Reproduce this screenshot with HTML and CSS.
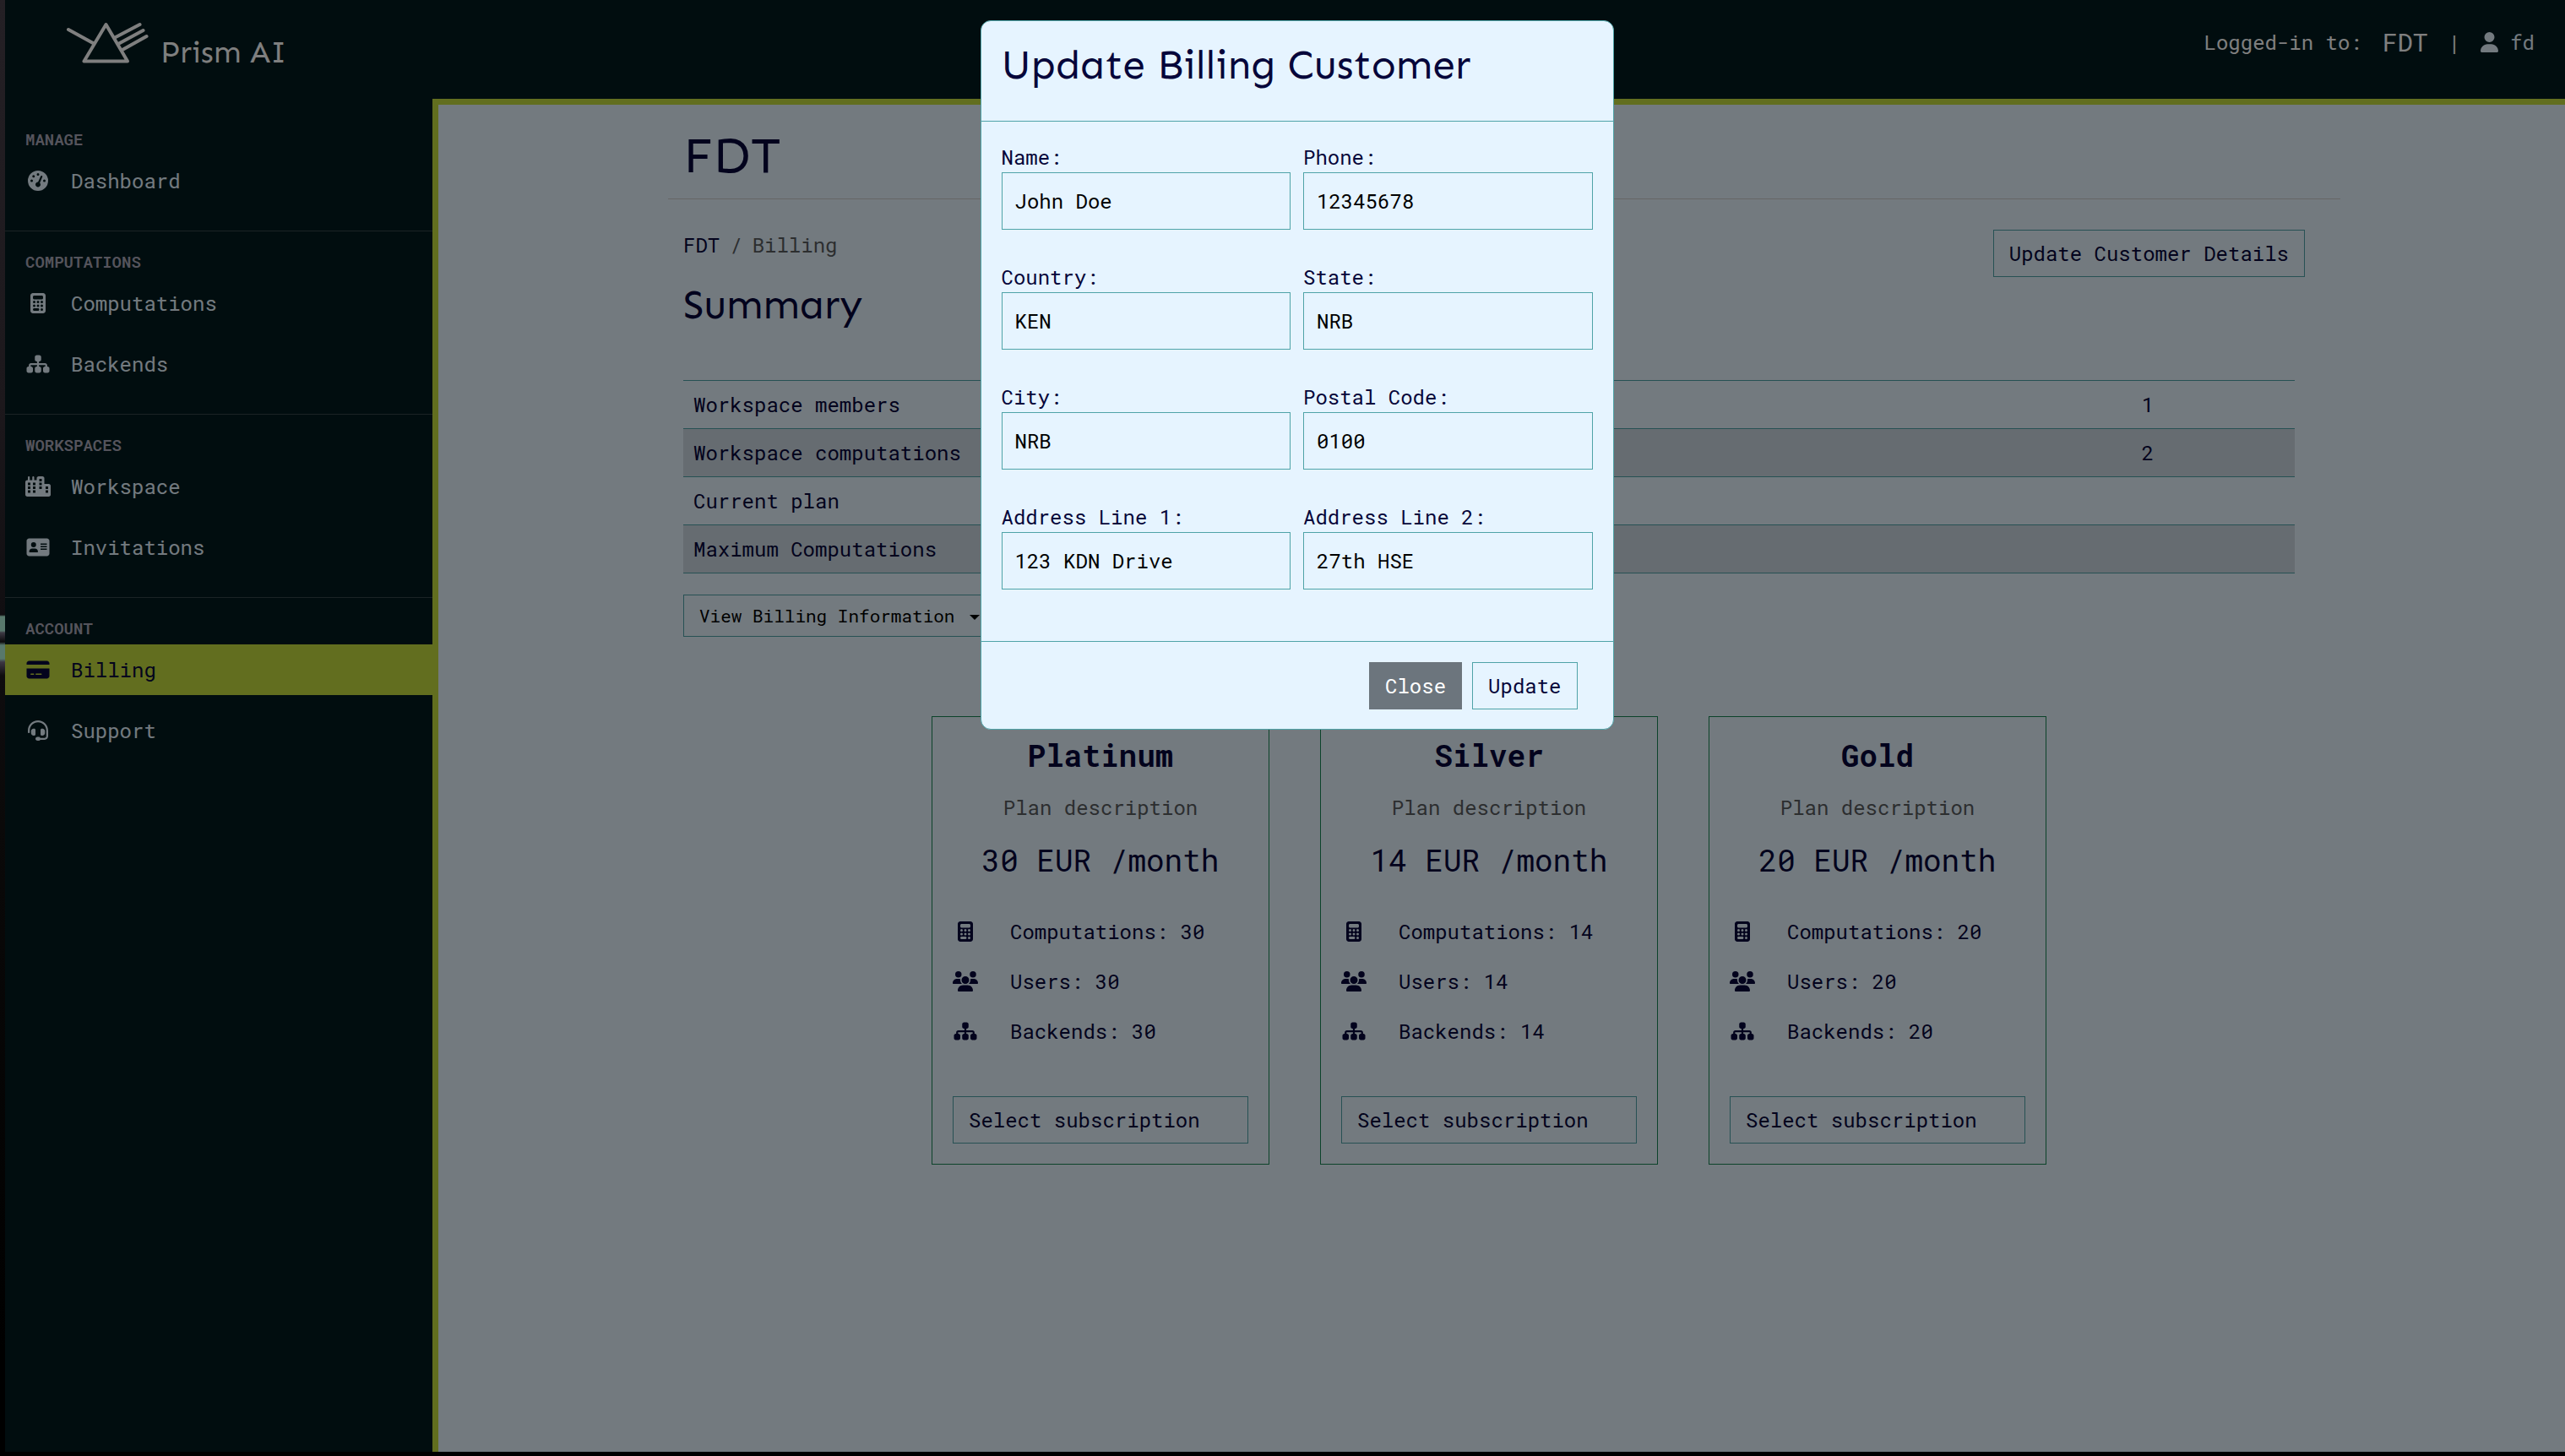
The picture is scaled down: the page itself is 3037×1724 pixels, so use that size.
FILE: index.html
```html
<!DOCTYPE html>
<html lang="en">
<head>
<meta charset="utf-8">
<title>Prism AI – Billing</title>
<link rel="stylesheet" href="styles.css">
</head>
<body>
<svg class="sprite" aria-hidden="true">
  <symbol id="i-gauge" viewBox="0 0 512 512"><path d="M0 256a256 256 0 1 1 512 0A256 256 0 1 1 0 256zM288 96a32 32 0 1 0 -64 0 32 32 0 1 0 64 0zM256 416c35.300 0 64-28.700 64-64c0-17.400-6.900-33.100-18.100-44.600L366 161.700c5.300-12.100-.2-26.300-12.300-31.600s-26.300 .2-31.600 12.300L257.900 288c-.6 0-1.300 0-1.900 0c-35.300 0-64 28.700-64 64s28.700 64 64 64zM176 144a32 32 0 1 0 -64 0 32 32 0 1 0 64 0zM96 288a32 32 0 1 0 0-64 32 32 0 1 0 0 64zm352-32a32 32 0 1 0 -64 0 32 32 0 1 0 64 0z"/></symbol>
  <symbol id="i-calculator" viewBox="0 0 384 512"><path d="M64 0C28.700 0 0 28.700 0 64V448c0 35.300 28.700 64 64 64H320c35.300 0 64-28.700 64-64V64c0-35.300-28.700-64-64-64H64zM96 64H288c17.700 0 32 14.300 32 32v32c0 17.700-14.300 32-32 32H96c-17.700 0-32-14.300-32-32V96c0-17.700 14.300-32 32-32zm32 160a32 32 0 1 1 -64 0 32 32 0 1 1 64 0zM96 352a32 32 0 1 1 0-64 32 32 0 1 1 0 64zM64 416c0-17.700 14.300-32 32-32h96c17.700 0 32 14.300 32 32s-14.300 32-32 32H96c-17.700 0-32-14.300-32-32zM192 256a32 32 0 1 1 0-64 32 32 0 1 1 0 64zm32 64a32 32 0 1 1 -64 0 32 32 0 1 1 64 0zm64-64a32 32 0 1 1 0-64 32 32 0 1 1 0 64zm32 64a32 32 0 1 1 -64 0 32 32 0 1 1 64 0zM288 448a32 32 0 1 1 0-64 32 32 0 1 1 0 64z"/></symbol>
  <symbol id="i-sitemap" viewBox="0 0 576 512"><path d="M208 80c0-26.500 21.500-48 48-48h64c26.500 0 48 21.500 48 48v64c0 26.500-21.500 48-48 48h-8v40H464c30.900 0 56 25.100 56 56v32h8c26.500 0 48 21.500 48 48v64c0 26.500-21.500 48-48 48H464c-26.500 0-48-21.500-48-48V368c0-26.500 21.500-48 48-48h8V288c0-4.400-3.600-8-8-8H312v40h8c26.500 0 48 21.500 48 48v64c0 26.500-21.500 48-48 48H256c-26.500 0-48-21.500-48-48V368c0-26.500 21.500-48 48-48h8V280H112c-4.400 0-8 3.600-8 8v32h8c26.500 0 48 21.500 48 48v64c0 26.500-21.500 48-48 48H48c-26.500 0-48-21.500-48-48V368c0-26.500 21.500-48 48-48h8V288c0-30.900 25.100-56 56-56H264V192h-8c-26.500 0-48-21.500-48-48V80z"/></symbol>
  <symbol id="i-city" viewBox="0 0 640 512"><path fill-rule="evenodd" d="M480 48c0-26.500-21.500-48-48-48H336c-26.500 0-48 21.500-48 48V96H224V24c0-13.300-10.700-24-24-24s-24 10.700-24 24V96H112V24c0-13.300-10.700-24-24-24S64 10.700 64 24V96H48C21.500 96 0 117.500 0 144V464c0 26.500 21.500 48 48 48H592c26.500 0 48-21.500 48-48V240c0-26.500-21.500-48-48-48H480V48zM64 160h64v64H64zM192 160h64v64H192zM64 256h64v64H64zM192 256h64v64H192zM64 352h64v64H64zM192 352h64v64H192zM352 64h64v64H352zM352 160h64v64H352zM352 256h64v64H352zM512 256h64v64H512zM512 352h64v64H512z"/></symbol>
  <symbol id="i-card" viewBox="0 0 576 512"><path fill-rule="evenodd" d="M64 32C28.700 32 0 60.700 0 96V416c0 35.300 28.700 64 64 64H512c35.300 0 64-28.700 64-64V96c0-35.300-28.700-64-64-64H64zm80 256h64c44.200 0 80 35.800 80 80c0 8.800-7.200 16-16 16H80c-8.800 0-16-7.200-16-16c0-44.200 35.800-80 80-80zm-32-96a64 64 0 1 1 128 0 64 64 0 1 1 -128 0zM352 160H512v32H352zM352 224H512v32H352zM352 288H512v32H352z"/></symbol>
  <symbol id="i-credit" viewBox="0 0 576 512"><path d="M64 32C28.700 32 0 60.700 0 96v32H576V96c0-35.300-28.700-64-64-64H64zM576 224H0V416c0 35.300 28.700 64 64 64H512c35.300 0 64-28.700 64-64V224zM112 352h64c8.800 0 16 7.200 16 16s-7.200 16-16 16H112c-8.800 0-16-7.200-16-16s7.200-16 16-16zm112 16c0-8.800 7.200-16 16-16H368c8.800 0 16 7.200 16 16s-7.200 16-16 16H240c-8.800 0-16-7.200-16-16z"/></symbol>
  <symbol id="i-headset" viewBox="0 0 512 512"><path d="M256 48C141.100 48 48 141.100 48 256v40c0 13.300-10.700 24-24 24s-24-10.700-24-24V256C0 114.600 114.600 0 256 0S512 114.600 512 256V400.100c0 48.600-39.400 88-88.100 88L313.600 488c-8.300 14.300-23.800 24-41.600 24H240c-26.500 0-48-21.500-48-48s21.500-48 48-48h32c17.800 0 33.300 9.700 41.600 24l110.400 .1c22.100 0 40-17.900 40-40V256c0-114.900-93.100-208-208-208zM144 208h16c17.700 0 32 14.300 32 32V352c0 17.700-14.300 32-32 32H144c-35.300 0-64-28.700-64-64V272c0-35.300 28.700-64 64-64zm224 0c35.300 0 64 28.700 64 64v48c0 35.300-28.700 64-64 64H352c-17.700 0-32-14.300-32-32V240c0-17.700 14.300-32 32-32h16z"/></symbol>
  <symbol id="i-user" viewBox="0 0 448 512"><path d="M224 256A128 128 0 1 0 224 0a128 128 0 1 0 0 256zm-45.700 48C79.800 304 0 383.800 0 482.300C0 498.700 13.300 512 29.700 512H418.300c16.400 0 29.700-13.300 29.700-29.700C448 383.800 368.200 304 269.700 304H178.300z"/></symbol>
  <symbol id="i-users" viewBox="0 0 640 512"><path d="M144 0a80 80 0 1 1 0 160A80 80 0 1 1 144 0zM512 0a80 80 0 1 1 0 160A80 80 0 1 1 512 0zM0 298.700C0 239.800 47.800 192 106.700 192h42.700c15.900 0 31 3.500 44.600 9.700c-1.300 7.200-1.900 14.700-1.900 22.300c0 38.200 16.800 72.500 43.300 96c-.2 0-.4 0-.7 0H21.300C9.600 320 0 310.400 0 298.700zM405.300 320c-.2 0-.4 0-.7 0c26.600-23.500 43.300-57.800 43.300-96c0-7.600-.7-15-1.900-22.300c13.600-6.300 28.700-9.700 44.600-9.700h42.700C592.200 192 640 239.800 640 298.700c0 11.800-9.600 21.300-21.300 21.300H405.300zM224 224a96 96 0 1 1 192 0 96 96 0 1 1 -192 0zM128 485.300C128 411.700 187.700 352 261.300 352H378.700C452.300 352 512 411.700 512 485.300c0 14.700-11.900 26.700-26.700 26.700H154.700c-14.700 0-26.700-11.900-26.700-26.700z"/></symbol>
</svg>

<div class="desk">
  <div class="app">
    <header class="topbar">
      <a class="brand" href="#">
        <svg class="brand-mark" viewBox="0 0 98 50" aria-hidden="true"><path d="M3 9L33 25.500M59 18L87.500 3M62 26L91.500 10M66 33.500L95.500 17M47.500 3L21.500 46.500H73z"/></svg>
        <span class="brand-name">Prism AI</span>
      </a>
      <div class="session">
        <span>Logged-in to:</span>
        <a class="session-space" href="#">FDT</a>
        <span>|</span>
        <a class="session-user" href="#"><svg class="icon icon-user" aria-hidden="true"><use href="#i-user"/></svg>fd</a>
      </div>
    </header>
    <nav class="sidebar">
      <section class="nav-group">
        <h2>MANAGE</h2>
        <a href="#"><svg class="icon"><use href="#i-gauge"/></svg>Dashboard</a>
      </section>
      <section class="nav-group">
        <h2>COMPUTATIONS</h2>
        <a href="#"><svg class="icon"><use href="#i-calculator"/></svg>Computations</a>
        <a href="#"><svg class="icon"><use href="#i-sitemap"/></svg>Backends</a>
      </section>
      <section class="nav-group">
        <h2>WORKSPACES</h2>
        <a href="#"><svg class="icon"><use href="#i-city"/></svg>Workspace</a>
        <a href="#"><svg class="icon"><use href="#i-card"/></svg>Invitations</a>
      </section>
      <section class="nav-group">
        <h2>ACCOUNT</h2>
        <a class="active" href="#"><svg class="icon"><use href="#i-credit"/></svg>Billing</a>
        <a href="#"><svg class="icon"><use href="#i-headset"/></svg>Support</a>
      </section>
    </nav>
    <main class="main">
      <div class="container">
        <h1 class="page-title">FDT</h1>
        <div class="page-head">
          <div>
            <div class="crumbs"><a href="#">FDT</a><span>/</span><span>Billing</span></div>
            <h2 class="summary-title">Summary</h2>
          </div>
          <button class="btn" type="button">Update Customer Details</button>
        </div>
        <div class="content">
          <table class="summary">
            <tbody>
              <tr><td>Workspace members</td><td class="num">1</td></tr>
              <tr><td>Workspace computations</td><td class="num">2</td></tr>
              <tr><td>Current plan</td><td class="num"></td></tr>
              <tr><td>Maximum Computations</td><td class="num"></td></tr>
            </tbody>
          </table>
          <button class="btn btn-small" type="button">View Billing Information<span class="caret"></span></button>
          <div class="plans">
            <article class="plan">
              <h3>Platinum</h3>
              <p class="plan-note">Plan description</p>
              <p class="plan-price">30 EUR /month</p>
              <ul>
                <li><svg class="icon"><use href="#i-calculator"/></svg>Computations: 30</li>
                <li><svg class="icon"><use href="#i-users"/></svg>Users: 30</li>
                <li><svg class="icon"><use href="#i-sitemap"/></svg>Backends: 30</li>
              </ul>
              <button class="btn" type="button">Select subscription</button>
            </article>
            <article class="plan">
              <h3>Silver</h3>
              <p class="plan-note">Plan description</p>
              <p class="plan-price">14 EUR /month</p>
              <ul>
                <li><svg class="icon"><use href="#i-calculator"/></svg>Computations: 14</li>
                <li><svg class="icon"><use href="#i-users"/></svg>Users: 14</li>
                <li><svg class="icon"><use href="#i-sitemap"/></svg>Backends: 14</li>
              </ul>
              <button class="btn" type="button">Select subscription</button>
            </article>
            <article class="plan">
              <h3>Gold</h3>
              <p class="plan-note">Plan description</p>
              <p class="plan-price">20 EUR /month</p>
              <ul>
                <li><svg class="icon"><use href="#i-calculator"/></svg>Computations: 20</li>
                <li><svg class="icon"><use href="#i-users"/></svg>Users: 20</li>
                <li><svg class="icon"><use href="#i-sitemap"/></svg>Backends: 20</li>
              </ul>
              <button class="btn" type="button">Select subscription</button>
            </article>
          </div>
        </div>
      </div>
    </main>
    <div class="backdrop">
      <form class="modal" role="dialog" aria-labelledby="modal-title">
        <header class="modal-head"><h2 id="modal-title">Update Billing Customer</h2></header>
        <div class="modal-body">
          <div class="field"><label for="name">Name:</label><input id="name" type="text" value="John Doe"></div>
          <div class="field"><label for="phone">Phone:</label><input id="phone" type="text" value="12345678"></div>
          <div class="field"><label for="country">Country:</label><input id="country" type="text" value="KEN"></div>
          <div class="field"><label for="state">State:</label><input id="state" type="text" value="NRB"></div>
          <div class="field"><label for="city">City:</label><input id="city" type="text" value="NRB"></div>
          <div class="field"><label for="postal">Postal Code:</label><input id="postal" type="text" value="0100"></div>
          <div class="field"><label for="line1">Address Line 1:</label><input id="line1" type="text" value="123 KDN Drive"></div>
          <div class="field"><label for="line2">Address Line 2:</label><input id="line2" type="text" value="27th HSE"></div>
        </div>
        <footer class="modal-foot">
          <button class="btn btn-close" type="button">Close</button>
          <button class="btn" type="submit">Update</button>
        </footer>
      </form>
    </div>
  </div>
</div>
</body>
</html>
```
FILE: styles.css
```css
:root {
  --ink: #06063a;
  --ice: #e6f4ff;
  --teal: #4fa3a8;
  --lime: #c4dc3e;
  --night: #021a1e;
  --mono: "Roboto Mono", "DejaVu Sans Mono", monospace;
  --display: Sen, "Noto Sans", sans-serif;
}

* { box-sizing: border-box; }

body {
  margin: 0;
  background: #000;
  color: var(--ink);
  font: 24px/36px var(--mono);
}

h1, h2, h3, p, ul { margin: 0; padding: 0; font-weight: 400; }
ul { list-style: none; }
a { color: inherit; text-decoration: none; }

.sprite { display: none; }

.icon {
  flex: none;
  width: 30px;
  height: 24px;
  fill: currentColor;
}

/* Desktop wallpaper showing beside the app window */
.desk {
  min-height: 100vh;
  display: flex;
  padding: 0 0 5px 6px;
  background: linear-gradient(#242025, #1c181c 480px, #100e11 728px, #58786c 730px, #58786c 747px, #3d3a44 749px, #0c0a0c 760px, #58786c 764px, #58786c 780px, #3c3642 784px, #0e0c0e 800px, #0a0909 980px, #000 1600px) left / 6px 100% no-repeat;
}

.app {
  position: relative;
  flex: 1;
  display: grid;
  grid-template: auto 1fr / 506px 1fr;
  background: var(--night);
}

/* Top bar */
.topbar {
  grid-column: 1 / -1;
  display: flex;
  justify-content: space-between;
  align-items: flex-start;
  height: 117px;
  padding: 26px 36px 0 72px;
  color: #fff;
}

.brand { display: flex; gap: 14px; }

.brand-mark {
  width: 98px;
  height: 50px;
  fill: none;
  stroke: currentColor;
  stroke-width: 4;
  stroke-linecap: round;
  stroke-linejoin: round;
}

.brand-name {
  padding-top: 14px;
  font: 36px/44px var(--display);
}

.session {
  display: flex;
  align-items: center;
  gap: 24px;
  padding-top: 6px;
}

.session-space { font-size: 30px; }

.session-user {
  display: flex;
  align-items: center;
  gap: 14px;
  color: var(--ice);
}

.icon-user { width: 21px; }

/* Sidebar */
.sidebar {
  padding-top: 12px;
  color: var(--ice);
}

.nav-group {
  display: flex;
  flex-direction: column;
  padding: 21px 0 29px;
}

.nav-group + .nav-group { border-top: 1px solid #36464a; }

.nav-group h2 {
  margin-bottom: 4px;
  padding-left: 24px;
  color: #aaa8b8;
  font-size: 19px;
  font-weight: 600;
  line-height: 30px;
}

.nav-group a {
  display: flex;
  align-items: center;
  gap: 24px;
  height: 60px;
  padding-left: 24px;
}

.nav-group a + a { margin-top: 12px; }
.nav-group .active { background: var(--lime); color: var(--ink); }

/* Main area */
.main {
  border: solid var(--lime);
  border-width: 7px 0 0 7px;
  padding-left: 6px;
  background: var(--ice);
}

.container { max-width: 1980px; margin: 0 auto; }

.page-title {
  height: 112px;
  padding: 24px 18px 0;
  border-bottom: 1px solid #ccc;
  font: 60px/72px var(--display);
}

.page-head {
  display: flex;
  justify-content: space-between;
  align-items: flex-start;
  padding: 36px 42px 60px 18px;
}

.crumbs { display: flex; gap: 12px; color: #595c5f; }
.crumbs a { color: var(--ink); }

.summary-title {
  margin-top: 24px;
  font: 48px/58px var(--display);
}

.content { padding: 0 54px 24px 18px; }

.btn {
  height: 56px;
  padding: 0 18px;
  border: 1px solid var(--teal);
  background: transparent;
  color: var(--ink);
  font: 24px/36px var(--mono);
  text-align: left;
}

.btn-small {
  height: 50px;
  margin-top: 25px;
  color: #000;
  font-size: 21px;
  line-height: 30px;
}

.caret {
  display: inline-block;
  margin-left: 18px;
  border: 6px solid transparent;
  border-top-color: currentColor;
  border-bottom: 0;
  vertical-align: middle;
}

.summary {
  width: 100%;
  border-collapse: collapse;
}

.summary td {
  height: 57px;
  padding: 0 12px;
  border: solid var(--teal);
  border-width: 1px 0;
}

.summary tr:nth-child(even) { background: rgba(0, 0, 0, .11); }
.summary .num { width: 348px; text-align: center; }

/* Plans */
.plans {
  display: flex;
  justify-content: center;
  gap: 60px;
  margin-top: 94px;
}

.plan {
  display: flex;
  flex-direction: column;
  width: 400px;
  padding: 24px;
  border: 1px solid #198754;
  text-align: center;
}

.plan h3 { font-size: 36px; font-weight: 700; line-height: 42px; }
.plan-note { margin: 23px 0; color: #595c5f; }
.plan-price { font-size: 36px; line-height: 42px; }

.plan ul {
  display: grid;
  gap: 23px;
  margin: 46px 0 59px;
}

.plan li { display: flex; align-items: center; gap: 38px; }

/* Modal */
.backdrop {
  position: absolute;
  inset: 0;
  display: flex;
  justify-content: center;
  align-items: flex-start;
  padding: 24px 0 24px 28px;
  background: rgba(0, 0, 0, .5);
}

.modal {
  width: 750px;
  border: 1px solid var(--teal);
  border-radius: 12px;
  background: var(--ice);
}

.modal-head {
  height: 119px;
  padding: 23px 24px;
  border-bottom: 1px solid var(--teal);
}

.modal-head h2 { font: 48px/58px var(--display); }

.modal-body {
  display: grid;
  grid-template-columns: 1fr 1fr;
  gap: 38px 15px;
  padding: 24px 24px 61px;
}

.field { display: flex; flex-direction: column; }

.field input {
  width: 100%;
  height: 68px;
  padding: 0 15px;
  border: 1px solid var(--teal);
  background: transparent;
  color: #000;
  font: 24px/36px var(--mono);
}

.modal-foot {
  display: flex;
  justify-content: flex-end;
  gap: 12px;
  padding: 24px 42px 23px;
  border-top: 1px solid var(--teal);
}

.btn-close {
  border-color: #6c757d;
  background: #6c757d;
  color: #fff;
}
```
